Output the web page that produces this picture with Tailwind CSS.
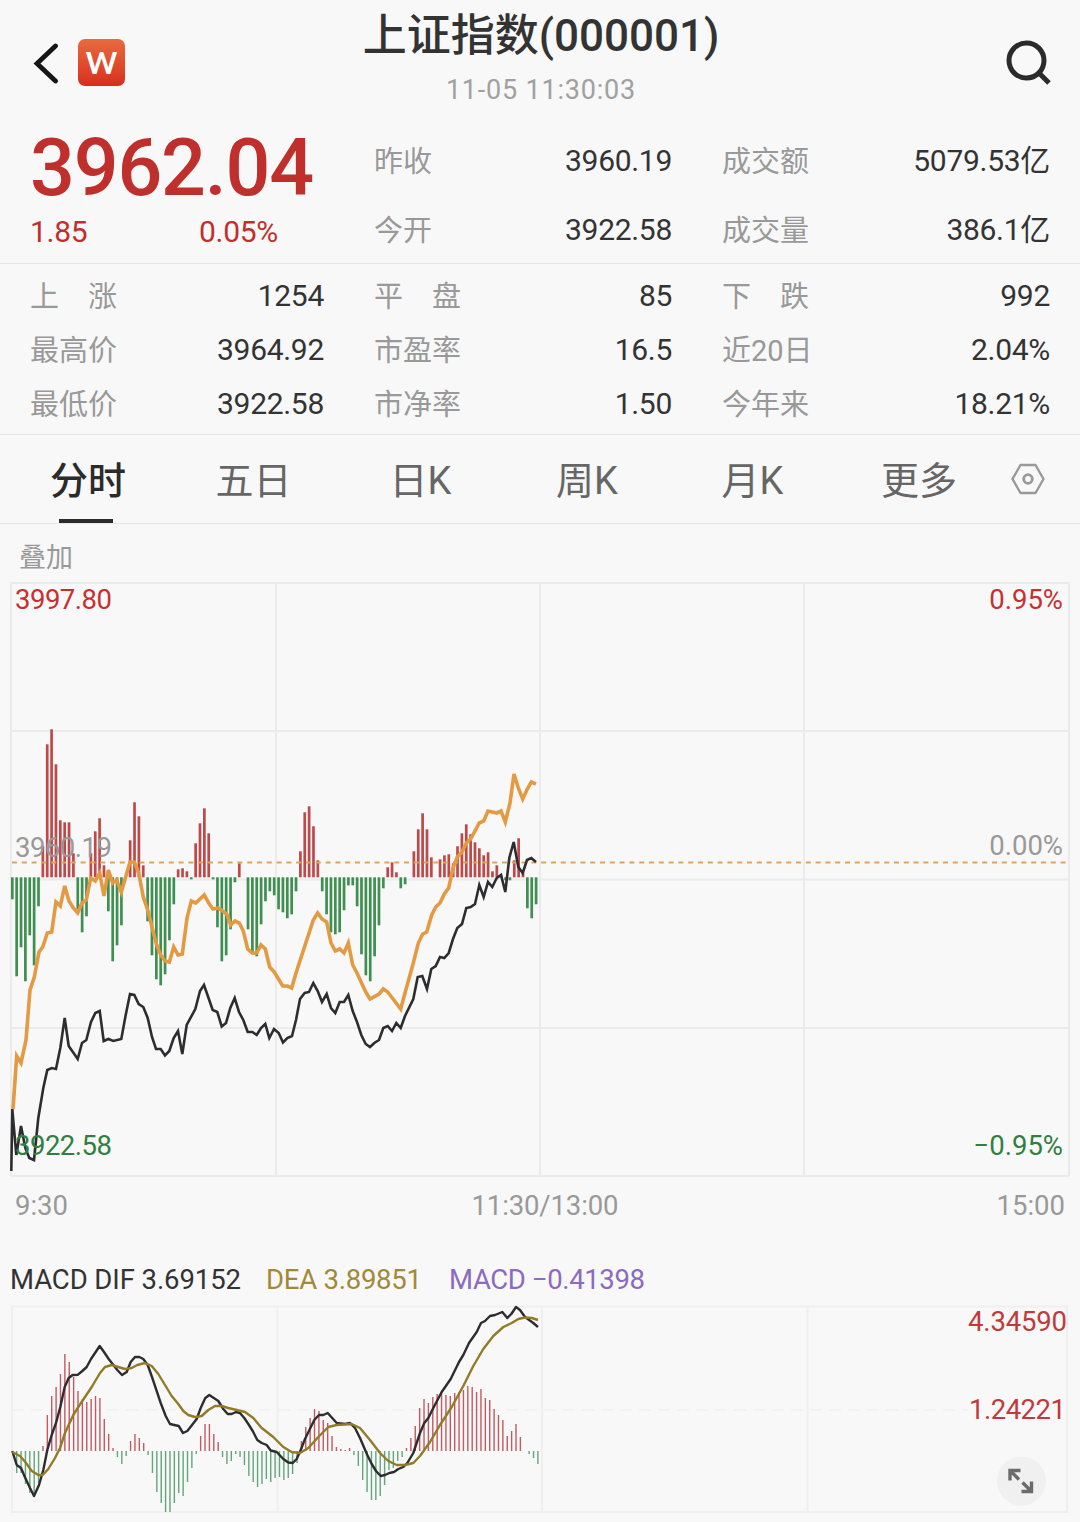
<!DOCTYPE html>
<html lang="zh-CN">
<head>
    <meta charset="UTF-8">
    <meta name="viewport" content="width=device-width, initial-scale=1.0">
    <title>上证指数(000001)</title>
    <script src="https://cdn.jsdelivr.net/npm/@tailwindcss/browser@4"></script>
</head>
<body class="bg-[#f8f8f8] text-[#333] font-['Roboto','Noto_Sans_CJK_SC',sans-serif]">
    <div class="w-[1080px] h-[1522px] overflow-hidden flex flex-col">
        <!-- Header -->
        <header class="h-[124px] flex justify-between shrink-0 pl-[30px] pr-[28px]">
            <div class="flex items-center w-[200px] gap-[16px]">
                <svg class="w-[32px] h-[44px]" viewBox="0 0 32 44" fill="none" stroke="#161616" stroke-width="4.8" stroke-linecap="round"><path d="M25.5 6 L7 23.5 L25.5 41"/></svg>
                <div class="w-[47px] h-[47px] rounded-[7px] bg-linear-to-b from-[#e8693f] to-[#d72d1b] flex items-center justify-center text-white text-[30px] leading-none font-bold font-['Lato',sans-serif]">W</div>
            </div>
            <div class="flex flex-col items-center">
                <h1 class="mt-[6px] h-[60px] leading-[60px] text-[44px] font-medium whitespace-nowrap">上证指数<span>(000001)</span></h1>
                <div class="h-[49px] leading-[49px] text-[27px] text-[#a0a0a0] tracking-[0.8px]">11-05 11:30:03</div>
            </div>
            <div class="flex items-center justify-end w-[200px]">
                <svg class="w-[48px] h-[48px]" viewBox="0 0 48 48" fill="none" stroke="#2b2b2b" stroke-width="5"><circle cx="22.5" cy="22.500" r="17.5"/><path d="M34.500 34.500 L45 45"/></svg>
            </div>
        </header>

        <!-- Price -->
        <section class="h-[140px] shrink-0 px-[30px] grid grid-cols-[294px_298px_328px] gap-x-[50px] border-b border-[#e6e6e6] text-[29px]">
            <div class="text-[#bf302d]">
                <div class="h-[86px] leading-[89px] text-[79px] font-medium tracking-[-1.2px]">3962.04</div>
                <div class="flex h-[44px] leading-[44px] text-[30px] tracking-[-0.3px]"><span class="w-[169px]">1.85</span><span>0.05%</span></div>
            </div>
            <div class="leading-[69px] pt-[2px]">
                <div class="flex justify-between"><span class="mt-[2px] -mb-[2px] text-[#999]">昨收</span><span class="text-[30px] tracking-[-0.3px]">3960.19</span></div>
                <div class="flex justify-between"><span class="mt-[2px] -mb-[2px] text-[#999]">今开</span><span class="text-[30px] tracking-[-0.3px]">3922.58</span></div>
            </div>
            <div class="leading-[69px] pt-[2px]">
                <div class="flex justify-between"><span class="mt-[2px] -mb-[2px] text-[#999]">成交额</span><span class="text-[30px] tracking-[-0.3px]">5079.53亿</span></div>
                <div class="flex justify-between"><span class="mt-[2px] -mb-[2px] text-[#999]">成交量</span><span class="text-[30px] tracking-[-0.3px]">386.1亿</span></div>
            </div>
        </section>

        <!-- Stats -->
        <section class="h-[171px] shrink-0 pt-[5px] px-[30px] grid grid-cols-[294px_298px_328px] auto-rows-[54px] gap-x-[50px] border-b border-[#e6e6e6] text-[30px] leading-[54px] tracking-[-0.3px]">
            <div class="flex justify-between"><span class="mt-[1px] text-[29px] tracking-normal text-[#999]">上　涨</span><span>1254</span></div>
            <div class="flex justify-between"><span class="mt-[1px] text-[29px] tracking-normal text-[#999]">平　盘</span><span>85</span></div>
            <div class="flex justify-between"><span class="mt-[1px] text-[29px] tracking-normal text-[#999]">下　跌</span><span>992</span></div>
            <div class="flex justify-between"><span class="mt-[1px] text-[29px] tracking-normal text-[#999]">最高价</span><span>3964.92</span></div>
            <div class="flex justify-between"><span class="mt-[1px] text-[29px] tracking-normal text-[#999]">市盈率</span><span>16.5</span></div>
            <div class="flex justify-between"><span class="mt-[1px] text-[29px] tracking-normal text-[#999]">近20日</span><span>2.04%</span></div>
            <div class="flex justify-between"><span class="mt-[1px] text-[29px] tracking-normal text-[#999]">最低价</span><span>3922.58</span></div>
            <div class="flex justify-between"><span class="mt-[1px] text-[29px] tracking-normal text-[#999]">市净率</span><span>1.50</span></div>
            <div class="flex justify-between"><span class="mt-[1px] text-[29px] tracking-normal text-[#999]">今年来</span><span>18.21%</span></div>
        </section>

        <!-- Tabs -->
        <nav class="h-[89px] shrink-0 pl-[5px] flex border-b border-[#e6e6e6] text-[38px] leading-[92px] text-[#666] text-center">
            <div class="w-[166px] flex flex-col items-center font-medium text-[#2b2b2b]"><span class="h-[84px]">分时</span><span class="w-[54px] h-[4px] mr-[4px] bg-[#2b2b2b]"></span></div>
            <div class="w-[165px]">五日</div>
            <div class="w-[169px]">日K</div>
            <div class="w-[164px]">周K</div>
            <div class="w-[167px]">月K</div>
            <div class="w-[166px]">更多</div>
            <div class="flex items-center pl-[8px]">
                <svg class="w-[36px] h-[36px]" viewBox="0 0 36 36" fill="none" stroke="#999" stroke-width="2.400" stroke-linejoin="round"><path d="M10.500 4 H25.500 L33.500 18 L25.500 32 H10.500 L2.500 18 Z"/><circle cx="18" cy="18" r="4.300" stroke-width="2.800"/></svg>
            </div>
        </nav>

        <div class="h-[56px] shrink-0 pl-[19px] text-[27px] leading-[68px] text-[#999]">叠加</div>

        <!-- Intraday chart -->
        <svg class="block shrink-0 w-[1080px] h-[660px] text-[27.5px]" viewBox="0 580 1080 660" fill="none">
            <g stroke="#ebebeb" stroke-width="2">
                <path d="M11 583 H1069 M11 731 H1069 M11 879.500 H1069 M11 1028 H1069 M11 1176 H1069"/>
                <path d="M11 583 V1176 M276 583 V1176 M540 583 V1176 M804 583 V1176 M1069 583 V1176"/>
            </g>
            <g id="flow-bars"></g>
            <path d="M12 862.500 H1068" stroke="#dda35f" stroke-width="1.800" stroke-dasharray="5 4.800"/>
            <text x="15" y="857" fill="#999" textLength="97">3960.19</text>
            <polyline stroke="#e39a42" stroke-width="3.600" points="13,1109 16.7,1056 21,1063 26,1040 30,990 34.3,977 39,952 42.7,947 47.3,933 51.7,932 56,902 60.3,906 64.7,886 69,901 73.3,908 77.7,913 82,903 86.3,900 90.7,878 95.3,881 99.7,873 104,896 108.3,870 112.7,883 116.7,880 121.3,892 130,862 134.3,862 138.7,873 143.3,897 147.7,910 156.3,944 160.7,955 165,961 169.3,962 173.7,947 178,955 182.3,954 187,918 191.3,901 195.7,903 204.3,895 208.7,903 213,909 218.3,908 226.7,914 230.7,925 235,921 239.3,923 243.3,931 247.7,949 252.3,953 256.7,953 261,945 265.3,949 269.7,967 274.3,972 282.7,986 287.3,986 291.7,988 296,973 313.3,920 317.7,913 322,919 326.7,922 331,943 335.3,951 339.7,949 344,953 348.3,943 352.7,965 357,973 365.7,992 370,999 379,994 383.3,989 387.7,992 400.7,1009 405,993 413.3,963 418.3,943 422.7,934 426.7,932 431.7,915 435.7,907 440,903 444.3,894 448.7,888 453,868 457.3,857 462,852 466.3,843 470.7,839 479.3,823 483.7,821 488,811 496.7,813 501,811 505.3,822 510,803 514,774 518.3,788 522.7,799 527.3,789 531.3,782 536,784"/>
            <polyline stroke="#2d2d2f" stroke-width="2.600" points="11.3,1171 12.3,1109 16.3,1155 21,1126 25.3,1148 29.3,1158 34,1160 38.3,1118 43.3,1088 47.3,1070 51.7,1068 56,1069 60.3,1048 64.7,1018 68.7,1046 77.7,1059 82,1043 86.3,1040 91,1022 95.3,1013 99.7,1011 103.7,1041 108.3,1039 113.3,1041 121.3,1039 125.7,1015 130,994 134.3,995 138.7,1004 143.3,1007 147.7,1018 152,1037 156,1049 160.7,1049 165,1055.500 169.3,1051 173.7,1038 178,1031 182.3,1054 186.7,1025 195.3,1009 200,991 204,985 212.7,1010 217.3,1012 221.7,1026.500 226,1023 230.3,1008 234.7,998 239,1012 243.3,1020 247.7,1032 252.3,1032 256.7,1035 261,1028 265.3,1024 269.3,1038 274,1029 278.7,1033 283,1042.500 287.3,1038 292,1036 296,1020 300,999 304.7,993 309,992 313.3,983 317.7,991 322,1002 326.7,994 331,1008 335.3,1013 339.7,1002 344,1002 348.3,995 352.7,1011 357,1022 361.3,1035 365.7,1044 370,1047 374.3,1043 379,1040 383.3,1028 387.7,1026 392,1031 396.3,1023 400.7,1028 405,1016 413.3,999 417.7,977 422.3,976 427,989 431.3,969 435.7,966 440,957 444.3,958 448.7,953 453,939 457.3,928 462,924 466.3,908 470.7,907 475,904 479.3,885 483.7,897 488,882 492.3,887 496.7,878 501,875 505.3,892 509.3,858 513.7,842 518.3,867 522.7,873 527,860 531.3,858 536,862"/>
            <text x="15" y="609" fill="#c8302f" textLength="97">3997.80</text>
            <text x="15" y="1155" fill="#2f8040" textLength="97">3922.58</text>
            <g text-anchor="end">
                <text x="1063" y="609" fill="#c8302f">0.95%</text>
                <text x="1063" y="855" fill="#999">0.00%</text>
                <text x="1063" y="1155" fill="#2f8040">−0.95%</text>
            </g>
            <g fill="#999">
                <text x="15" y="1215">9:30</text>
                <text x="545" y="1215" text-anchor="middle" textLength="147">11:30/13:00</text>
                <text x="1065" y="1215" text-anchor="end">15:00</text>
            </g>
        </svg>

        <!-- MACD chart -->
        <svg class="block shrink-0 w-[1080px] h-[282px] text-[27.5px]" viewBox="0 1240 1080 282" fill="none">
            <text x="10" y="1289" fill="#333" textLength="231">MACD DIF 3.69152</text>
            <text x="266" y="1289" fill="#a08a38" textLength="156">DEA 3.89851</text>
            <text x="449" y="1289" fill="#8a6bc0" textLength="196">MACD −0.41398</text>
            <g stroke="#efefef" stroke-width="2">
                <path d="M12 1306.500 H1067 V1512 H12 Z M277.500 1306.500 V1512 M542 1306.500 V1512 M807.500 1306.500 V1512"/>
                <path d="M12 1410 H968" stroke-dasharray="12 7" stroke-width="1.500"/>
            </g>
            <g id="macd-bars"></g>
            <polyline stroke="#2d2d2f" stroke-width="2.400" stroke-linejoin="round" points="12.3,1451 16.7,1465 21,1468 25.3,1478 30,1488 34,1496 39,1485 43.3,1470 47.3,1450 51.7,1435 56,1423 60.3,1407 64.7,1387 68.7,1378 72.7,1375 78,1374.700 82.3,1371 86.7,1367 91,1359 99.7,1346 104,1352 108.7,1359 117.3,1370 122,1375 126.7,1372 130.7,1362 135,1357 139.3,1357 143.3,1359 147.7,1365 152,1377 160.7,1403 165.7,1416 170,1424 178.7,1426 183,1433 187.3,1431 196.7,1419 200.7,1408 205.3,1398 209.3,1395 218.3,1401 223.3,1409 227.7,1414 231.7,1414 236,1412 240,1413 244.3,1418 248.3,1424 252.7,1431 257.3,1440 261.7,1443 266.7,1445 270.7,1450.500 276.7,1452 283.3,1459 288.3,1462.500 292.7,1463 296.7,1459 300.7,1450 305,1439 314.3,1420 319,1415 323.3,1415 327.7,1413 336.7,1423 345,1424 350,1423 355,1428 360,1438 367.3,1455 371.7,1464 376,1471 380.7,1476 385,1475 389.3,1473 394,1472 398.3,1469 403.3,1467 407.3,1463 413.3,1453 420,1433 424.3,1423 428.3,1418 433.3,1408 441.7,1392 450.7,1379 459,1362 463.3,1355 469,1343 476.7,1332 481,1323 485,1321 490,1316 495,1315 502.3,1312 507.3,1318 511.3,1314 516,1307 520,1310 525,1317 533.3,1323 538,1327"/>
            <polyline stroke="#927b27" stroke-width="2.400" stroke-linejoin="round" points="12.3,1452 20,1456 25.3,1462 31.7,1471 38.3,1475 42.7,1475 48.3,1469 55,1458 60,1448 65,1433 73.3,1415 78.3,1407 85,1397 91.7,1387 100,1373 105,1367 111.7,1365 118.3,1367 125,1369 131.7,1368 137.3,1365 145,1363 151.7,1366 158.3,1374 165,1385 171.7,1396 178.3,1404 183.3,1411 188.3,1415 195,1417 201.7,1416 208.3,1410 215,1406 221.7,1406 228.3,1408 236.7,1410 245,1412 253.3,1418 261.7,1428 273.3,1437 283.3,1447 291.7,1452 300,1453 308.3,1448 318.3,1437 328.3,1427 336.7,1425 351.7,1424 360,1428 370,1440 380,1453 388.3,1461 396.7,1465 405,1465 413.3,1463 420,1456 430,1442 440,1425 451.7,1407 463.3,1386 473.3,1366 483.3,1349 493.3,1336 503.3,1327 511.7,1323 518.3,1319 525,1317.500 531.7,1318 538,1320"/>
            <text x="968" y="1331" fill="#c03a3c" textLength="99">4.34590</text>
            <text x="969" y="1419" fill="#c03a3c" textLength="97">1.24221</text>
            <circle cx="1021.500" cy="1481" r="24.500" fill="#f0f0f0"/>
            <path d="M1010 1480.500 V1470.500 H1020.500 M1010.500 1471 L1019 1479.500 M1031.500 1481.500 V1491.500 H1021.500 M1031 1491 L1022.500 1482.500" stroke="#6b6b6b" stroke-width="3.400"/>
        </svg>
    </div>

    <script>
        // One value per minute, 9:30 to 11:30
        const flow = [
            -22, -99, -70, -104, -58, -88, -29, 31, 133, 148, 113, 57, 55, 55, 24, -32, -55, -39, 24, 46,
            59, 12, -34, -84, -68, -48, 0, 37, 75, 61, 12, -44, -78, -102, -108, -97, -63, -27, 8, 9,
            6, -2, 34, 54, 69, 44, -2, -50, -84, -78, -52, -5, 14, 0, -52, -77, -79, -47, -24, -14,
            -18, -32, -35, -41, -37, -14, 26, 65, 71, 51, 17, -14, -37, -55, -57, -55, -33, -8, -8, -29,
            -77, -98, -104, -79, -48, -11, 10, 15, 5, -11, -7, 0, 26, 48, 64, 48, 20, 0, 18, 22,
            23, 14, 31, 44, 53, 43, 35, 29, 22, 25, 6, 12, 2, -3, -3, 17, 39, 5, -31, -41, -27
        ];
        const macd = [
            0, -22, -22, -33, -42, -46, -32, 5, 36, 55, 64, 77, 97, 89, 74, 60, 52, 49, 52, 55,
            53, 32, 17, 3, -6, -13, -5, 10, 17, 13, 8, -4, -22, -41, -52, -61, -61, -52, -42, -45,
            -31, -17, -3, 15, 27, 27, 17, 9, -6, -13, -10, -3, -6, -14, -25, -31, -36, -33, -28, -31,
            -27, -26, -29, -27, -23, -12, 10, 24, 33, 42, 40, 31, 28, 15, 4, 2, 1, 3, -4, -15,
            -29, -41, -49, -49, -45, -34, -19, -17, -10, -6, 3, 13, 25, 43, 52, 48, 54, 57, 60, 56,
            55, 58, 59, 61, 65, 64, 59, 62, 53, 51, 42, 36, 31, 15, 20, 27, 14, 0, -3, -7, -13
        ];

        // Draw a bar series above and below its zero line
        function drawBars(id, values, step, zero, width, up, down) {
            const group = document.getElementById(id);
            values.forEach((value, i) => {
                if (!value) return;
                const bar = document.createElementNS('http://www.w3.org/2000/svg', 'rect');
                bar.setAttribute('x', 12.3 + i * step - width / 2);
                bar.setAttribute('y', value > 0 ? zero - value : zero);
                bar.setAttribute('width', width);
                bar.setAttribute('height', Math.abs(value));
                bar.setAttribute('fill', value > 0 ? up : down);
                group.appendChild(bar);
            });
        }

        drawBars('flow-bars', flow, 4.365, 877.3, 2.7, '#bd4a4a', '#3f8f50');
        drawBars('macd-bars', macd, 4.38, 1451, 1.4, '#c25a62', '#62a67c');
    </script>
</body>
</html>
